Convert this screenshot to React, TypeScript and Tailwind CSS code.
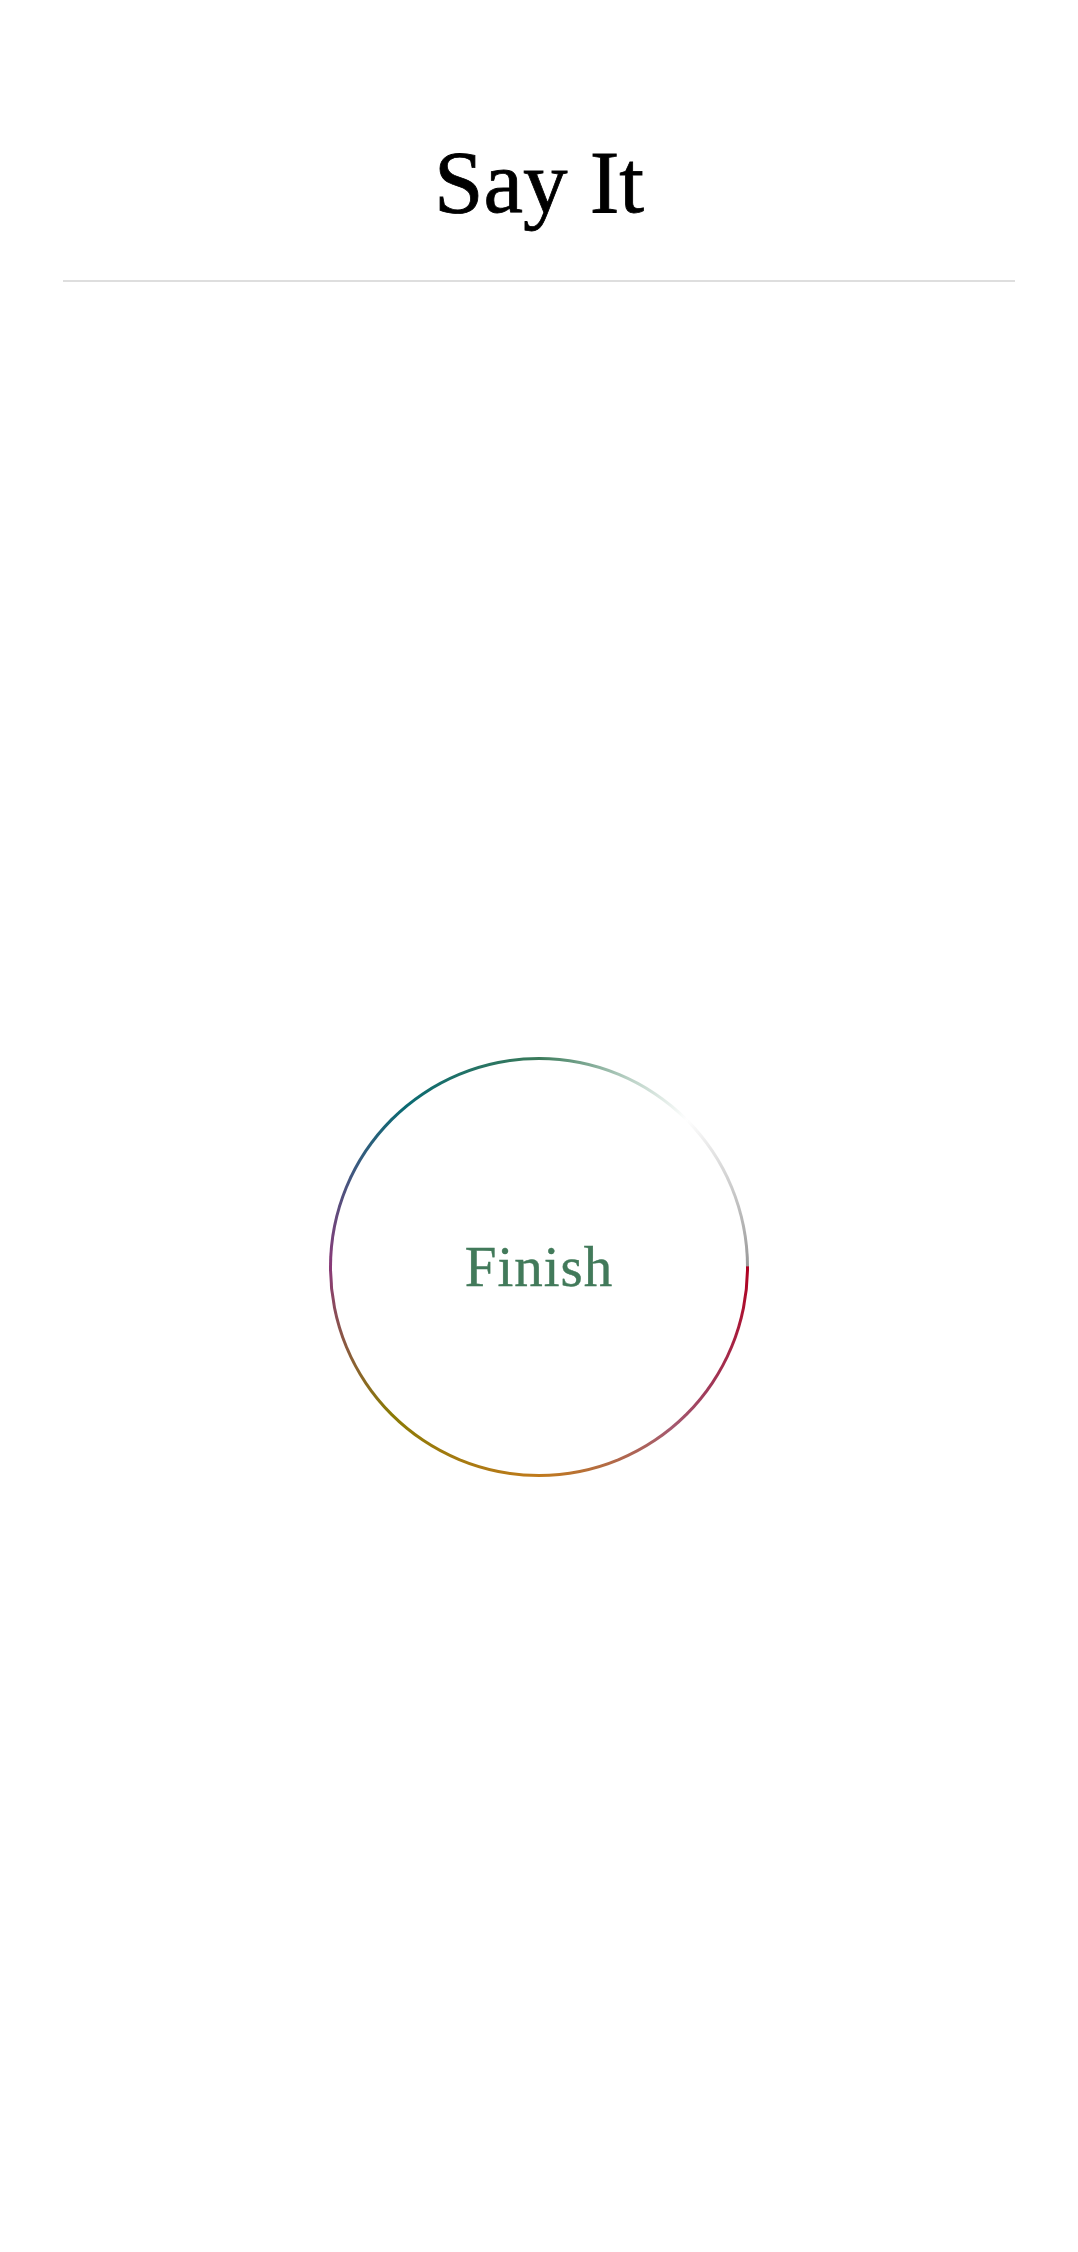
export default function App() {
  return (
    <div className="min-h-screen flex flex-col bg-white" style={{ fontFamily: '"Liberation Serif", "Times New Roman", serif' }}>
      <header className="pt-[138px] px-[63px]">
        <h1 className="text-center text-[89px] leading-[88px] text-black [-webkit-text-stroke:0.8px_black]">Say It</h1>
        <div className="mt-[54px] h-[2px] bg-[#dedede]" />
      </header>
      <main className="flex-1 flex items-center justify-center">
        <button className="w-[420px] h-[420px] rounded-full p-[3px] bg-[conic-gradient(from_90deg,#b00020,#a03a5a_10%,#a55a70_14%,#c07a1c_25%,#8a7a05_37.5%,#8a3a78_50%,#3a5a80_58%,#0a6a72_64%,#3a7a5a_75%,#b8d0c4_82%,#ffffff_87.5%,#999999_99.9%,#b00020_100%)]">
          <span className="flex w-full h-full items-center justify-center rounded-full bg-white pb-[2px] text-[57px] leading-none tracking-[1px] text-[#427a5a] [-webkit-text-stroke:0.4px_#427a5a]">
            Finish
          </span>
        </button>
      </main>
    </div>
  )
}
